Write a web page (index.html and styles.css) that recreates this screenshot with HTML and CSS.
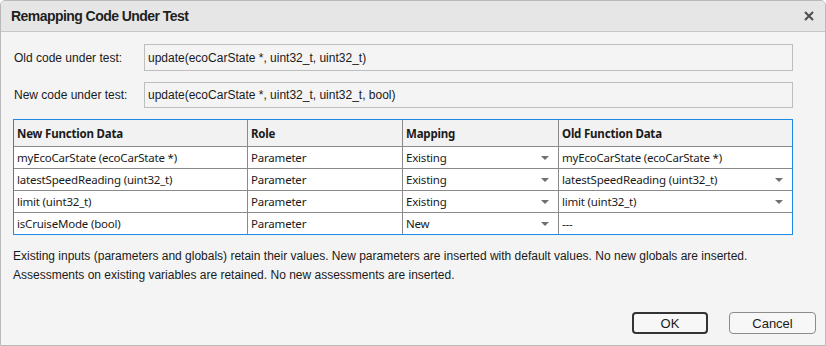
FILE: index.html
```html
<!DOCTYPE html>
<html>
<head>
<meta charset="utf-8">
<link rel="stylesheet" href="styles.css">
</head>
<body>
<div class="dialog">
  <div class="titlebar">
    <span class="title">Remapping Code Under Test</span>
    <svg class="close" width="10" height="10" viewBox="0 0 10 10"><path d="M1 1 L9 9 M9 1 L1 9" stroke="#4d4d4d" stroke-width="2" fill="none"/></svg>
  </div>
  <div class="content">
    <div class="field-row">
      <span class="label">Old code under test:</span>
      <div class="field">update(ecoCarState *, uint32_t, uint32_t)</div>
    </div>
    <div class="field-row">
      <span class="label">New code under test:</span>
      <div class="field">update(ecoCarState *, uint32_t, uint32_t, bool)</div>
    </div>
    <table class="grid">
      <colgroup>
        <col class="c1"><col class="c2"><col class="c3"><col class="c4">
      </colgroup>
      <thead>
        <tr><th>New Function Data</th><th>Role</th><th>Mapping</th><th>Old Function Data</th></tr>
      </thead>
      <tbody>
        <tr><td>myEcoCarState (ecoCarState *)</td><td>Parameter</td><td><div class="dd">Existing<span class="arrow"></span></div></td><td>myEcoCarState (ecoCarState *)</td></tr>
        <tr><td>latestSpeedReading (uint32_t)</td><td>Parameter</td><td><div class="dd">Existing<span class="arrow"></span></div></td><td><div class="dd">latestSpeedReading (uint32_t)<span class="arrow"></span></div></td></tr>
        <tr><td>limit (uint32_t)</td><td>Parameter</td><td><div class="dd">Existing<span class="arrow"></span></div></td><td><div class="dd">limit (uint32_t)<span class="arrow"></span></div></td></tr>
        <tr><td>isCruiseMode (bool)</td><td>Parameter</td><td><div class="dd">New<span class="arrow"></span></div></td><td>---</td></tr>
      </tbody>
    </table>
    <div class="note">
      <p>Existing inputs (parameters and globals) retain their values. New parameters are inserted with default values. No new globals are inserted.</p>
      <p>Assessments on existing variables are retained. No new assessments are inserted.</p>
    </div>
    <div class="buttons">
      <button class="btn primary">OK</button>
      <button class="btn">Cancel</button>
    </div>
  </div>
</div>
</body>
</html>
```

FILE: styles.css
```css
html, body {
  margin: 0;
  padding: 0;
  background: #ffffff;
}
.dialog {
  box-sizing: border-box;
  width: 826px;
  height: 346px;
  border: 1px solid #b9b9b9;
  border-radius: 5px 5px 0 0;
  background: #f4f4f4;
  display: flex;
  flex-direction: column;
  font-family: "Liberation Sans", Arial, sans-serif;
  font-size: 12px;
  color: #1a1a1a;
  overflow: hidden;
}
.titlebar {
  height: 30px;
  flex: none;
  background: #e6e6e6;
  border-bottom: 1px solid #c6c6c6;
  display: flex;
  align-items: center;
  justify-content: space-between;
  padding: 0 11px 0 10px;
}
.title {
  font-size: 14px;
  font-weight: bold;
  color: #1f1f1f;
  letter-spacing: -0.55px;
}
.close {
  display: block;
}
.content {
  flex: 1;
  display: flex;
  flex-direction: column;
  padding: 12px 32px 0 12px;
}
.field-row {
  display: flex;
  align-items: center;
  margin-bottom: 11px;
}
.label {
  width: 130px;
  flex: none;
  padding-left: 1px;
}
.field {
  flex: 1;
  height: 25px;
  border: 1px solid #bdbdbd;
  display: flex;
  align-items: center;
  padding-left: 3px;
  background: #f4f4f4;
}
.field-row + .field-row .field {
  height: 24px;
}
.grid {
  border-collapse: separate;
  border-spacing: 0;
  width: 780px;
  table-layout: fixed;
  border: 1px solid #1e88e5;
  background: #ffffff;
  font-family: "Noto Sans", "Open Sans", sans-serif;
  font-size: 11.5px;
  letter-spacing: -0.2px;
  color: #1a1a1a;
}
.c1 { width: 234px; }
.c2 { width: 155px; }
.c3 { width: 156px; }
.c4 { width: 233px; }
.grid th, .grid td {
  box-sizing: border-box;
  border: 0;
  border-right: 1px solid #8a8a8a;
  border-bottom: 1px solid #8a8a8a;
  text-align: left;
  padding: 0 3px;
  white-space: nowrap;
}
.grid tr > :last-child { border-right: 0; }
.grid tbody tr:last-child td { border-bottom: 0; }
.grid thead th {
  background: #f2f2f2;
  height: 27px;
  font-weight: bold;
}
.grid td {
  height: 22px;
}
.grid tbody tr:last-child td { height: 21px; }
.dd {
  display: flex;
  align-items: center;
  justify-content: space-between;
  padding-right: 6px;
}
.arrow {
  width: 0;
  height: 0;
  border-left: 4px solid transparent;
  border-right: 4px solid transparent;
  border-top: 4px solid #707070;
}
.note {
  margin-top: 12px;
  line-height: 19px;
}
.note p {
  margin: 0;
}
.buttons {
  margin-top: auto;
  margin-bottom: 11px;
  margin-right: -23px;
  display: flex;
  justify-content: flex-end;
  gap: 21px;
}
.btn {
  font-family: "Liberation Sans", Arial, sans-serif;
  font-size: 13px;
  color: #1a1a1a;
  height: 22px;
  background: #f7f7f7;
  border: 1px solid #8c8c8c;
  border-radius: 4px;
  padding: 0;
  width: 87px;
}
.btn.primary {
  border: 2px solid #333333;
  width: 76px;
}
```
